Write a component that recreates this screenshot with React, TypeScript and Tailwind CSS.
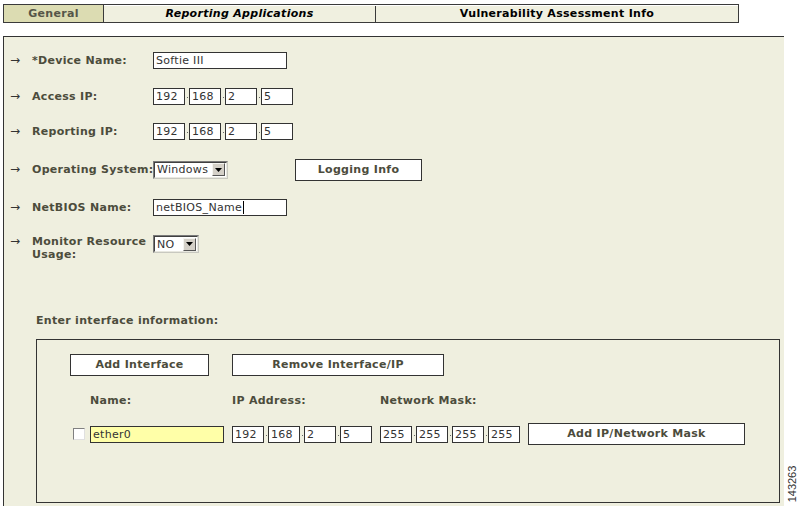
import React from "react";

const Field: React.FC<{ value: string; width: string; caret?: boolean; yellow?: boolean }> = ({
  value,
  width,
  caret,
  yellow,
}) => (
  <div
    className={`flex h-[17px] items-center border border-[#333] px-[2px] text-[11px] leading-none tracking-[0.3px] text-[#333] ${width} ${
      yellow ? "bg-[#ffffa8]" : "bg-white"
    }`}
  >
    <span>{value}</span>
    {caret && <span className="ml-px h-[13px] w-px bg-black" />}
  </div>
);

const IpGroup: React.FC<{ parts: string[] }> = ({ parts }) => (
  <div className="flex items-center">
    {parts.map((p, i) => (
      <React.Fragment key={i}>
        {i > 0 && (
          <div className="flex w-[4px] justify-center pt-[3px]">
            <span className="h-[1px] w-[1px] bg-[#666]" />
          </div>
        )}
        <Field value={p} width="w-[32px]" />
      </React.Fragment>
    ))}
  </div>
);

const Select: React.FC<{ value: string; width: string }> = ({ value, width }) => (
  <div className={`flex h-[18px] shrink-0 border border-t-[#7a7a7a] border-l-[#7a7a7a] border-b-[#c8c8c0] border-r-[#c8c8c0] ${width}`}>
    <div className="flex flex-1 items-center border border-t-[#404040] border-l-[#404040] border-b-[#e8e8e0] border-r-[#e8e8e0] bg-white pl-[2px] pr-px">
      <span className="flex-1 text-[11px] leading-none tracking-[0.3px] text-[#333]">{value}</span>
      <span className="flex h-[13px] w-[13px] items-center justify-center border border-t-[#f4f4f0] border-l-[#f4f4f0] border-b-[#555] border-r-[#555] bg-[#d4d0c8]">
        <svg width="7" height="4" viewBox="0 0 7 4">
          <path d="M0 0h7L3.5 4z" fill="#000" />
        </svg>
      </span>
    </div>
  </div>
);

const Button: React.FC<{ label: string; width: string }> = ({ label, width }) => (
  <div
    className={`flex h-[22px] items-center justify-center border border-[#333] bg-white pt-px text-[11px] font-bold tracking-[0.3px] text-[#4c4c3c] ${width}`}
  >
    {label}
  </div>
);

const Row: React.FC<{ label: React.ReactNode; height: string; top?: boolean; children: React.ReactNode }> = ({
  label,
  height,
  top,
  children,
}) => (
  <div className={`flex pl-[6px] ${top ? "items-start" : "items-center"} ${height}`}>
    <span className="w-[22px] shrink-0 text-[12px] leading-[13px] text-[#333]">→</span>
    <span className="w-[121px] shrink-0 whitespace-nowrap text-[11px] font-bold leading-[13px] tracking-[0.3px] text-[#4c4c3c]">
      {label}
    </span>
    {children}
  </div>
);

export default function App() {
  return (
    <div className="relative h-[506px] w-[798px] overflow-hidden bg-white font-['DejaVu_Sans',sans-serif]">
      {/* tabs */}
      <div className="ml-[3px] mt-[4px] flex h-[19px] w-[736px] border border-[#3a3a3a] pt-px text-[11px] font-bold tracking-[0.3px]">
        <div className="-mt-px flex w-[100px] items-center justify-center border-r border-[#3a3a3a] bg-[#dcdcb2] pt-px text-[#555548]">
          General
        </div>
        <div className="flex w-[272px] items-center justify-center border-r border-[#3a3a3a] bg-[#f0f0e0] italic text-black">
          Reporting Applications
        </div>
        <div className="flex flex-1 items-center justify-center bg-[#f0f0e0] text-black">
          Vulnerability Assessment Info
        </div>
      </div>

      {/* panel */}
      <div className="ml-[3px] mt-[13px] h-[470px] w-[781px] border-l border-t border-[#333] bg-[#efefdf]">
        <div className="mt-[5px]">
          <Row label="*Device Name:" height="h-[36px]">
            <Field value="Softie III" width="w-[134px]" />
          </Row>
          <Row label="Access IP:" height="h-[36px]">
            <IpGroup parts={["192", "168", "2", "5"]} />
          </Row>
          <Row label="Reporting IP:" height="h-[34px]">
            <IpGroup parts={["192", "168", "2", "5"]} />
          </Row>
          <Row label="Operating System:" height="h-[43px]">
            <Select value="Windows" width="w-[75px]" />
            <div className="ml-[67px]">
              <Button label="Logging Info" width="w-[127px]" />
            </div>
          </Row>
          <Row label="NetBIOS Name:" height="h-[32px]">
            <Field value="netBIOS_Name" width="w-[134px]" caret />
          </Row>
          <div className="mt-[12px]">
            <Row
              label={
                <>
                  Monitor Resource
                  <br />
                  Usage:
                </>
              }
              height="h-[26px]"
              top
            >
              <Select value="NO" width="w-[46px]" />
            </Row>
          </div>
        </div>

        <div className="ml-[32px] mt-[53px] text-[11px] font-bold leading-[13px] tracking-[0.3px] text-[#4c4c3c]">
          Enter interface information:
        </div>

        {/* interface box */}
        <div className="ml-[32px] mt-[12px] h-[164px] w-[744px] border border-[#333]">
          <div className="ml-[33px] mt-[14px] flex gap-[23px]">
            <Button label="Add Interface" width="w-[139px]" />
            <Button label="Remove Interface/IP" width="w-[212px]" />
          </div>

          <div className="ml-[53px] mt-[18px] flex text-[11px] font-bold leading-[13px] tracking-[0.3px] text-[#4c4c3c]">
            <span className="w-[142px]">Name:</span>
            <span className="w-[148px]">IP Address:</span>
            <span>Network Mask:</span>
          </div>

          <div className="ml-[36px] mt-[16px] flex h-[22px] items-center">
            <span className="h-[12px] w-[12px] border border-t-[#808080] border-l-[#808080] border-b-[#e0e0e0] border-r-[#e0e0e0] bg-white" />
            <div className="ml-[5px]">
              <Field value="ether0" width="w-[134px]" yellow />
            </div>
            <div className="ml-[8px]">
              <IpGroup parts={["192", "168", "2", "5"]} />
            </div>
            <div className="ml-[8px]">
              <IpGroup parts={["255", "255", "255", "255"]} />
            </div>
            <div className="ml-[8px]">
              <Button label="Add IP/Network Mask" width="w-[217px]" />
            </div>
          </div>
        </div>
      </div>

      <span className="absolute left-[772px] top-[478px] h-[12px] w-[40px] -rotate-90 text-center font-['Liberation_Sans',sans-serif] text-[11px] leading-[12px] text-[#333]">
        143263
      </span>
    </div>
  );
}
